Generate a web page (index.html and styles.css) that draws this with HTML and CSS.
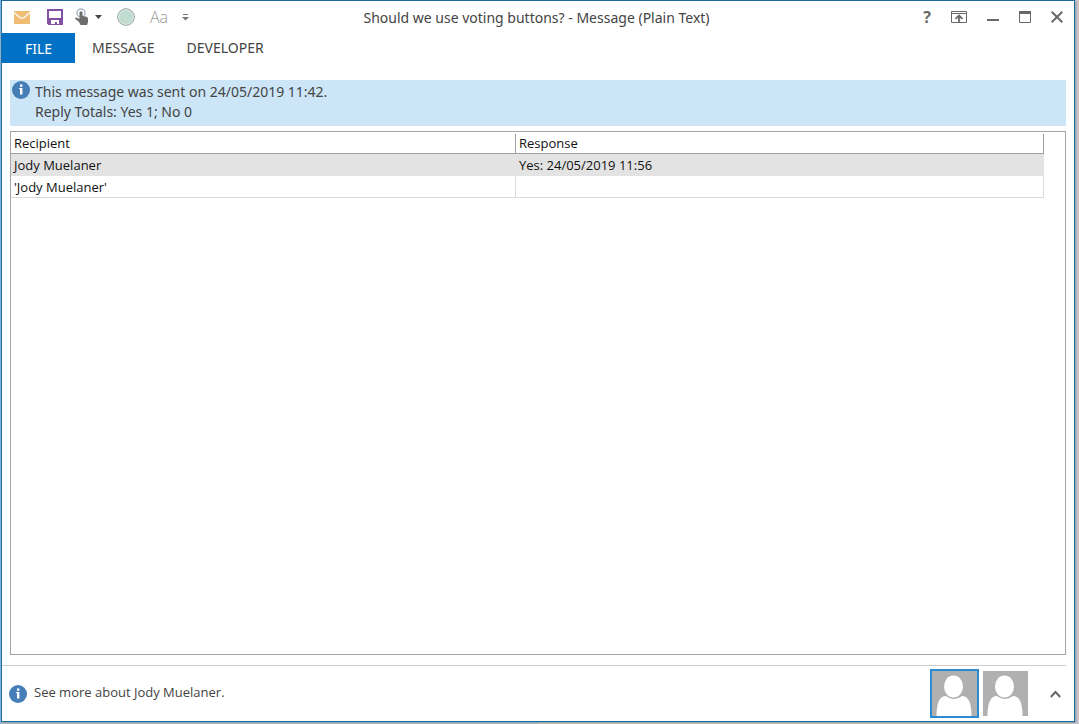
FILE: index.html
```html
<!DOCTYPE html>
<html lang="en">
<head>
<meta charset="utf-8">
<title>Should we use voting buttons? - Message (Plain Text)</title>
<link rel="stylesheet" href="styles.css">
</head>
<body>
<div class="window">
  <header class="titlebar">
    <div class="quick">
      <svg class="mail" width="16" height="13" viewBox="0 0 16 13" aria-hidden="true"><path d="M0 0h16v13H0z" fill="#efbd74"/><path d="M0 1.500L5.500 6.300q2.500 1.800 5 0L16 1.500" fill="none" stroke="#fff" stroke-width="1.300"/></svg>
      <button class="tool save" aria-label="Save"><svg width="16" height="16" viewBox="0 0 16 16"><path d="M1 1h14v14H2l-1-1z" fill="#fff" stroke="#8250a4" stroke-width="2"/><path d="M1 9h14v6H1z" fill="#8250a4"/><path d="M4 11h8v4h-2v-2H8v2H4z" fill="#fff"/></svg></button>
      <button class="tool touch" aria-label="Touch/Mouse mode"><svg width="14" height="18" viewBox="0 0 14 18"><circle cx="6" cy="5" r="4" fill="none" stroke="#aab6c8" stroke-width="1.500"/><path d="M4.500 4q1.500-1.500 3 0v4l4 .8q1.500.4 1.500 2V14l-1 3H5.500L4 14 0 10.500q1-1.500 2.500-.5l2 1z" fill="#6c6c6c"/></svg><svg class="drop" width="7" height="4" viewBox="0 0 7 4"><path d="M0 0h7L3.500 4z" fill="#444"/></svg></button>
      <button class="tool circle" aria-label="Status"><svg width="18" height="18" viewBox="0 0 18 18"><circle cx="9" cy="9" r="8.300" fill="#c0dcd1" stroke="#909b97"/><circle cx="9" cy="9" r="7.300" fill="none" stroke="#dcebe5"/></svg></button>
      <button class="tool font">Aa</button>
      <button class="tool more" aria-label="Customize Quick Access Toolbar"><svg width="7" height="7" viewBox="0 0 7 7"><path d="M1 0h5v1H1zM0 3h7L3.500 6.500z" fill="#777"/></svg></button>
    </div>
    <h1 class="title">Should we use voting buttons? - Message (Plain Text)</h1>
    <div class="controls">
      <button class="control help" aria-label="Help">?</button>
      <button class="control" aria-label="Ribbon Display Options"><svg width="16" height="12" viewBox="0 0 16 12"><path d="M.5.500h15v11H.5zM.5 2.500h15" fill="none" stroke="#686868"/><path d="M8 11V5M4.500 7.800L8 4.500l3.500 3.300" fill="none" stroke="#686868" stroke-width="1.800"/></svg></button>
      <button class="control" aria-label="Minimize"><svg width="12" height="12" viewBox="0 0 12 12"><path d="M0 8h12v2H0z" fill="#686868"/></svg></button>
      <button class="control" aria-label="Maximize"><svg width="12" height="12" viewBox="0 0 12 12"><path d="M.5.500h11v11H.5z" fill="none" stroke="#686868"/><path d="M0 0h12v3H0z" fill="#686868"/></svg></button>
      <button class="control" aria-label="Close"><svg width="12" height="12" viewBox="0 0 12 12"><path d="M.7.700l10.600 10.600M11.300.700L.7 11.300" stroke="#686868" stroke-width="2"/></svg></button>
    </div>
  </header>
  <nav class="tabs">
    <button class="tab file">FILE</button>
    <button class="tab">MESSAGE</button>
    <button class="tab">DEVELOPER</button>
  </nav>
  <section class="banner">
    <svg class="info" width="18" height="18" viewBox="0 0 18 18" aria-hidden="true"><circle cx="9" cy="9" r="9" fill="#467fb7"/><path d="M8 3.500h2.400v2.200H8zM7 7h3.400v6.500H8V8H7z" fill="#fff"/></svg>
    <p class="banner-text">This message was sent on 24/05/2019 11:42.<br>Reply Totals: Yes 1; No 0</p>
  </section>
  <main class="tracking">
    <table class="grid">
      <thead><tr><th><span class="head">Recipient</span></th><th><span class="head">Response</span></th></tr></thead>
      <tbody>
        <tr class="selected"><td>Jody Muelaner</td><td>Yes: 24/05/2019 11:56</td></tr>
        <tr><td>'Jody Muelaner'</td><td></td></tr>
      </tbody>
    </table>
  </main>
  <footer class="people">
    <svg class="info" width="18" height="18" viewBox="0 0 18 18" aria-hidden="true"><circle cx="9" cy="9" r="9" fill="#467fb7"/><path d="M8 3.500h2.400v2.200H8zM7 7h3.400v6.500H8V8H7z" fill="#fff"/></svg>
    <p class="see-more">See more about Jody Muelaner.</p>
    <button class="person active" aria-label="Jody Muelaner"><svg width="45" height="45" viewBox="0 0 45 45"><path d="M0 0h45v45H0z" fill="#b0b0b0"/><path d="M4.500 45Q4.500 25 14 25q8 6 16 0 9.500 0 9.500 20z" fill="#fff"/><ellipse cx="21.500" cy="15.500" rx="9.500" ry="11" fill="#fff" stroke="#b0b0b0" stroke-width="2" paint-order="stroke"/></svg></button>
    <button class="person" aria-label="'Jody Muelaner'"><svg width="45" height="45" viewBox="0 0 45 45"><path d="M0 0h45v45H0z" fill="#b0b0b0"/><path d="M4.500 45Q4.500 25 14 25q8 6 16 0 9.500 0 9.500 20z" fill="#fff"/><ellipse cx="21.500" cy="15.500" rx="9.500" ry="11" fill="#fff" stroke="#b0b0b0" stroke-width="2" paint-order="stroke"/></svg></button>
    <button class="expand" aria-label="Expand people pane"><svg width="11" height="8" viewBox="0 0 11 8"><path d="M.8 7L5.500 2l4.700 5" fill="none" stroke="#686868" stroke-width="2"/></svg></button>
  </footer>
</div>
</body>
</html>
```
FILE: styles.css
```css
* { box-sizing: border-box; }

body {
  margin: 0;
  height: 100vh;
  padding: 0 4px 2px 1px;
  background: linear-gradient(90deg, #7fb4e4 1px, #a9c4c8 1px 50%, #c9c5cb 50%);
  font-family: "Noto Sans", "Open Sans", sans-serif;
  color: #444;
}

button {
  margin: 0;
  padding: 0;
  border: 0;
  background: none;
  color: inherit;
  font: inherit;
}

svg { display: block; }

p, h1 { margin: 0; font-weight: 400; }

.window {
  display: flex;
  flex-direction: column;
  height: 100%;
  border: 1px solid #1c6b9c;
  background: #fff;
  box-shadow: 1px 1px 2px #8a9aa8;
}

.titlebar {
  display: grid;
  grid-template-columns: 1fr auto 1fr;
  align-items: center;
  height: 32px;
  padding: 0 11px 0 12px;
}

.quick { display: flex; align-items: center; }
.tool { display: flex; align-items: center; }
.save { margin-left: 17px; }
.touch { margin-left: 12px; }
.drop { margin-left: 6px; }
.circle { margin-left: 15px; }
.font {
  margin-left: 15px;
  color: #999;
  font-family: "Open Sans", sans-serif;
  font-weight: 300;
  font-size: 16px;
}
.more { margin-left: 14px; }

.title {
  padding: 2px 4px 0 0;
  font-size: 14px;
  line-height: 20px;
}

.controls {
  display: flex;
  justify-content: flex-end;
  align-items: center;
  gap: 20px;
}
.control { display: flex; align-items: center; color: #686868; }
.help { font-size: 16px; font-weight: 700; line-height: 20px; }

.tabs { display: flex; height: 30px; }
.tab {
  padding: 0 16px 2px;
  font-size: 14px;
}
.file {
  width: 73px;
  margin-right: 1px;
  padding: 0;
  background: #0072c6;
  color: #fff;
}

.banner {
  display: flex;
  gap: 5px;
  margin: 17px 8px 5px;
  padding: 1px 2px 3px;
  background: #cde6f7;
}
.banner-text {
  padding-top: 1px;
  padding-bottom: 1px;
  font-size: 14px;
  line-height: 20px;
}

.tracking {
  flex: 1;
  margin: 0 8px 10px;
  padding-right: 21px;
  border: 1px solid #a5a5a5;
}

.grid {
  width: 100%;
  border-collapse: separate;
  border-spacing: 0;
  table-layout: fixed;
  color: #111;
  font-family: "Open Sans", "Noto Sans", sans-serif;
  font-size: 13px;
  line-height: 20px;
}
.grid th, .grid td {
  height: 22px;
  padding: 0 3px;
  border-right: 1px solid #dadada;
  border-bottom: 1px solid #dadada;
  text-align: left;
  font-weight: 400;
}
.grid th:first-child { width: 505px; }
.grid th {
  padding: 2px 0 0;
  border-right: 0;
  border-bottom-color: #a0a0a0;
}
.head {
  display: block;
  padding-left: 3px;
  border-right: 1px solid #a0a0a0;
  line-height: 19px;
}
.grid .selected td { border-color: #e3e3e3; background: #e3e3e3; }

.people {
  display: flex;
  align-items: center;
  height: 56px;
  margin-right: 8px;
  padding: 0 5px 0 7px;
  border-top: 1px solid #cfcfcf;
}
.info { flex: none; }
.see-more {
  flex: 1;
  margin-left: 7px;
  padding-bottom: 3px;
  font-family: "Open Sans", "Noto Sans", sans-serif;
  font-size: 13px;
  line-height: 20px;
}
.person { border: 2px solid transparent; }
.person + .person { margin-left: 2px; }
.active { border-color: #2a8dd4; }
.expand { margin-left: 20px; }
```
